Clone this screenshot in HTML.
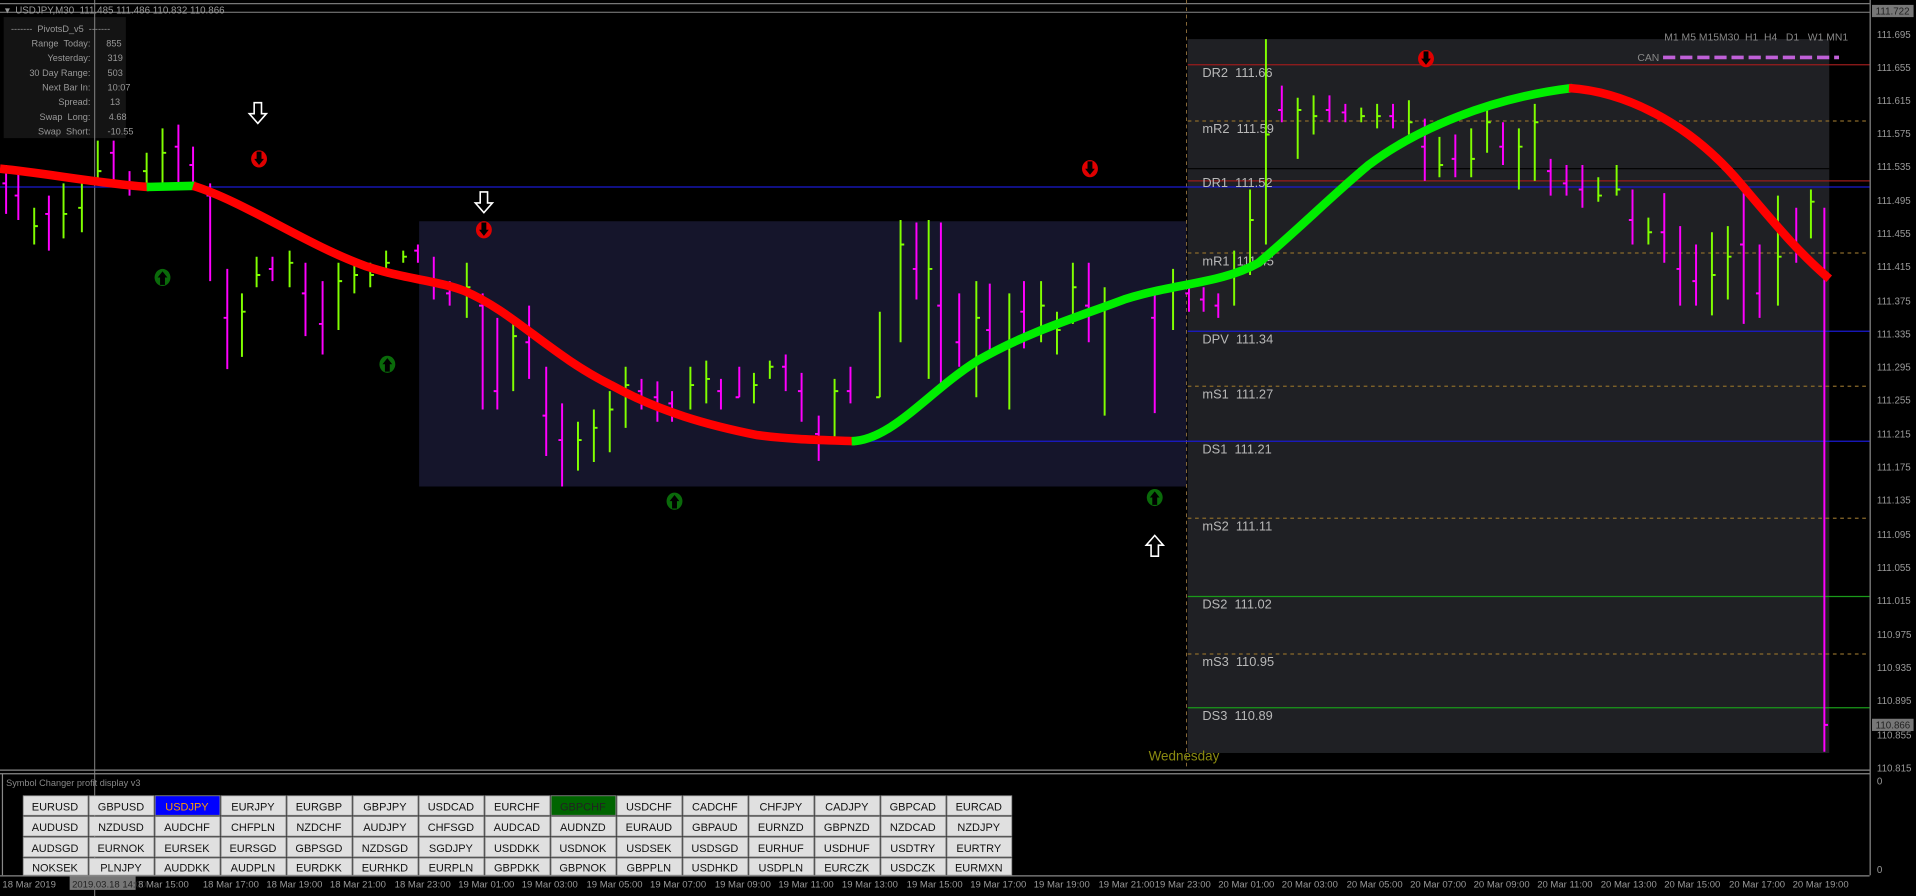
<!DOCTYPE html>
<html><head><meta charset="utf-8"><style>
html,body{margin:0;padding:0;background:#000;overflow:hidden}
svg{display:block}
text{font-family:"Liberation Sans",sans-serif;white-space:pre}
</style></head><body>
<svg width="1916" height="896" viewBox="0 0 1568 733" preserveAspectRatio="none" xmlns="http://www.w3.org/2000/svg" xml:space="preserve">
<rect width="1568" height="733" fill="#000"/>
<line x1="0" y1="3" x2="1530" y2="3" stroke="#777" stroke-width="1"/>
<line x1="0" y1="10" x2="1530" y2="10" stroke="#888" stroke-width="0.8"/>
<line x1="1530.5" y1="0" x2="1530.5" y2="716" stroke="#888" stroke-width="1"/>
<line x1="0" y1="630" x2="1530" y2="630" stroke="#888" stroke-width="1"/>
<line x1="0" y1="633" x2="1530" y2="633" stroke="#888" stroke-width="1"/>
<line x1="2" y1="633" x2="2" y2="716" stroke="#888" stroke-width="1"/>
<line x1="0" y1="716.5" x2="1530" y2="716.5" stroke="#888" stroke-width="1"/>
<rect x="343" y="181" width="628" height="217" fill="#15152b"/>
<rect x="972" y="32" width="525" height="584" fill="#1f2024"/>
<rect x="3" y="14" width="100" height="99" fill="#141414"/>
<line x1="971" y1="0" x2="971" y2="630" stroke="#8a6a3a" stroke-width="0.8" stroke-dasharray="3,3"/>
<line x1="77.5" y1="0" x2="77.5" y2="733" stroke="#888" stroke-width="0.8"/>
<g stroke-width="1">
<line x1="972" y1="53" x2="1530" y2="53" stroke="#9a1c1c"/>
<line x1="972" y1="99" x2="1530" y2="99" stroke="#8a6a2a" stroke-dasharray="3,3"/>
<line x1="972" y1="138" x2="1497" y2="138" stroke="#000"/>
<line x1="972" y1="148" x2="1530" y2="148" stroke="#9a1c1c"/>
<line x1="0" y1="153" x2="1530" y2="153" stroke="#1a1ad0"/>
<line x1="972" y1="207" x2="1530" y2="207" stroke="#8a6a2a" stroke-dasharray="3,3"/>
<line x1="972" y1="271" x2="1530" y2="271" stroke="#1a1ad0"/>
<line x1="972" y1="316" x2="1530" y2="316" stroke="#8a6a2a" stroke-dasharray="3,3"/>
<line x1="700" y1="361" x2="1530" y2="361" stroke="#1a1ad0"/>
<line x1="972" y1="424" x2="1530" y2="424" stroke="#8a6a2a" stroke-dasharray="3,3"/>
<line x1="972" y1="488" x2="1530" y2="488" stroke="#1a9a1a"/>
<line x1="972" y1="535" x2="1530" y2="535" stroke="#8a6a2a" stroke-dasharray="3,3"/>
<line x1="972" y1="579" x2="1530" y2="579" stroke="#1a9a1a"/>
</g>
<g fill="#b8b8b8" font-size="10.5">
<text x="984" y="63">DR2  111.66</text>
<text x="984" y="109">mR2  111.59</text>
<text x="984" y="153">DR1  111.52</text>
<text x="984" y="217">mR1  111.45</text>
<text x="984" y="281">DPV  111.34</text>
<text x="984" y="326">mS1  111.27</text>
<text x="984" y="371">DS1  111.21</text>
<text x="984" y="434">mS2  111.11</text>
<text x="984" y="498">DS2  111.02</text>
<text x="984" y="545">mS3  110.95</text>
<text x="984" y="589">DS3  110.89</text>
</g>
<text x="940" y="622" fill="#8a8a10" font-size="11">Wednesday</text>
<text x="1362" y="33" fill="#888" font-size="8.5">M1 M5 M15M30  H1  H4   D1   W1 MN1</text>
<text x="1340" y="50" fill="#888" font-size="8.5">CAN</text>
<line x1="1361" y1="47" x2="1505" y2="47" stroke="#c060d8" stroke-width="3" stroke-dasharray="10,4"/>
<g stroke-width="1.6" fill="none">
<path stroke="#ff00ff" d="M5 135V175M15 140V180M40 160V205M93 115V150M106 140V160M146 102V150M158 120V150M172 150V230M186 220V302M223 210V230M250 215V275M264 230V290M342 200V215M355 210V245M368 230V250M395 240V335M407 260V335M433 250V310M447 300V373M460 330V398M525 310V335M538 312V345M550 320V345M590 310V335M605 300V325M643 290V320M656 305V345M670 340V377M696 300V330M750 182V245M770 182V320M785 240V300M810 232V290M838 230V285M891 215V280M945 240V338M973 230V255M985 235V255M997 240V260M1049 70V100M1088 78V100M1101 85V100M1140 85V105M1166 97V148M1191 110V145M1230 100V135M1269 130V160M1282 135V160M1295 135V170M1336 155V200M1362 158V215M1375 185V250M1388 200V250M1427 155V265M1440 200V260M1470 170V215M1493 170V615"/>
<path stroke="#ff00ff" d="M2 150h3M12 160h3M37 175h3M90 125h3M103 150h3M143 120h3M155 135h3M169 160h3M183 260h3M220 220h3M247 240h3M261 265h3M339 205h3M352 230h3M365 240h3M392 250h3M404 320h3M430 280h3M444 340h3M457 360h3M522 320h3M535 325h3M547 330h3M587 320h3M602 325h3M640 300h3M653 320h3M667 355h3M693 320h3M747 220h3M767 250h3M782 280h3M807 270h3M835 255h3M888 250h3M942 260h3M970 240h3M982 245h3M994 250h3M1046 90h3M1085 90h3M1098 92h3M1137 95h3M1163 120h3M1188 130h3M1227 120h3M1266 140h3M1279 150h3M1292 155h3M1333 180h3M1359 190h3M1372 220h3M1385 230h3M1424 200h3M1437 240h3M1467 200h3M1493 593h3"/>
<path stroke="#80ff00" d="M28 170V200M52 150V195M67 150V190M80 115V150M120 125V150M133 105V150M198 240V292M210 210V235M237 205V235M277 215V270M290 215V240M303 215V235M316 205V225M330 205V215M382 215V260M420 260V320M473 345V385M486 335V378M499 320V370M512 300V350M565 300V335M578 295V330M617 305V330M630 295V310M683 310V360M720 255V325M737 180V280M760 180V310M799 230V325M826 240V335M852 230V280M865 255V290M878 215V265M904 235V340M960 220V270M1010 205V250M1023 155V225M1036 32V200M1062 80V130M1075 78V110M1114 88V100M1127 85V105M1153 82V110M1178 112V145M1204 105V145M1217 88V125M1243 105V155M1256 85V148M1308 145V165M1323 135V160M1349 178V200M1401 190V258M1414 185V245M1455 160V250M1482 155V195"/>
<path stroke="#80ff00" d="M28 185h3M52 175h3M64 170h3M80 140h3M117 140h3M133 125h3M198 255h3M210 225h3M237 215h3M277 230h3M290 225h3M303 225h3M316 215h3M330 210h3M382 235h3M420 275h3M473 360h3M486 350h3M499 335h3M512 315h3M565 315h3M578 310h3M617 315h3M630 300h3M683 320h3M717 325h3M737 200h3M760 220h3M799 260h3M826 280h3M852 250h3M865 270h3M878 235h3M904 250h3M960 235h3M1010 225h3M1023 180h3M1036 110h3M1062 90h3M1075 95h3M1114 95h3M1127 95h3M1153 100h3M1178 135h3M1204 130h3M1217 100h3M1243 120h3M1256 100h3M1308 160h3M1323 155h3M1349 190h3M1401 225h3M1414 210h3M1455 210h3M1482 165h3"/>
</g>
<g fill="none" stroke-width="7" stroke-linecap="butt">
<path stroke="#ff0000" d="M0 138C40 142 80 150 122 153"/>
<path stroke="#00ee00" d="M120 153L160 152"/>
<path stroke="#ff0000" d="M158 152C200 165 250 200 300 218C330 228 360 230 380 238C420 255 450 290 500 315C540 337 580 348 620 356C650 360 680 360 700 361"/>
<path stroke="#00ee00" d="M697 361C730 360 760 320 800 295C840 272 880 260 920 245C960 232 1000 232 1030 215C1060 190 1090 160 1120 135C1160 105 1220 80 1287 72"/>
<path stroke="#ff0000" d="M1284 72C1330 75 1380 100 1420 145C1450 180 1470 205 1497 228"/>
</g>
<g fill="none" stroke="#fff" stroke-width="1.3">
<path d="M208 84h6v9h4l-7 8l-7-8h4z"/>
<path d="M393 157h6v9h4l-7 8l-7-8h4z"/>
<path d="M942 455h6v-9h4l-7-8l-7 8h4z"/>
</g>
<g>
<g transform="translate(212,130)"><ellipse rx="6.5" ry="7" fill="#e00000"/><path d="M-2 -6v6h-2l4 5 4-5h-2v-6z" fill="#000"/></g>
<g transform="translate(396,188)"><ellipse rx="6.5" ry="7" fill="#e00000"/><path d="M-2 -6v6h-2l4 5 4-5h-2v-6z" fill="#000"/></g>
<g transform="translate(892,138)"><ellipse rx="6.5" ry="7" fill="#e00000"/><path d="M-2 -6v6h-2l4 5 4-5h-2v-6z" fill="#000"/></g>
<g transform="translate(1167,48)"><ellipse rx="6.5" ry="7" fill="#e00000"/><path d="M-2 -6v6h-2l4 5 4-5h-2v-6z" fill="#000"/></g>
<g transform="translate(133,227)"><ellipse rx="6.5" ry="7" fill="#0a6a0a"/><path d="M-2 6v-6h-2l4-5 4 5h-2v6z" fill="#000"/></g>
<g transform="translate(317,298)"><ellipse rx="6.5" ry="7" fill="#0a6a0a"/><path d="M-2 6v-6h-2l4-5 4 5h-2v6z" fill="#000"/></g>
<g transform="translate(552,410)"><ellipse rx="6.5" ry="7" fill="#0a6a0a"/><path d="M-2 6v-6h-2l4-5 4 5h-2v6z" fill="#000"/></g>
<g transform="translate(945,407)"><ellipse rx="6.5" ry="7" fill="#0a6a0a"/><path d="M-2 6v-6h-2l4-5 4 5h-2v6z" fill="#000"/></g>
</g>
<text x="4" y="11" fill="#999" font-size="8">▾  USDJPY,M30  111.485 111.486 110.832 110.866</text>
<g fill="#999" font-size="7.5" text-anchor="end">
<text x="74" y="38">Range  Today:</text><text x="74" y="50">Yesterday:</text><text x="74" y="62">30 Day Range:</text><text x="74" y="74">Next Bar In:</text><text x="74" y="86">Spread:</text><text x="74" y="98">Swap  Long:</text><text x="74" y="110">Swap  Short:</text>
</g>
<text x="9" y="26" fill="#999" font-size="7.5">-------  PivotsD_v5  -------</text>
<g fill="#999" font-size="7.5">
<text x="87" y="38">855</text><text x="88" y="50">319</text><text x="88" y="62">503</text><text x="88" y="74">10:07</text><text x="90" y="86">13</text><text x="89" y="98">4.68</text><text x="88" y="110">-10.55</text>
</g>
<g fill="#999" font-size="8">
<text x="1536" y="58">111.655</text><text x="1536" y="85">111.615</text><text x="1536" y="112">111.575</text><text x="1536" y="139">111.535</text><text x="1536" y="167">111.495</text><text x="1536" y="194">111.455</text><text x="1536" y="221">111.415</text><text x="1536" y="249">111.375</text><text x="1536" y="276">111.335</text><text x="1536" y="303">111.295</text><text x="1536" y="330">111.255</text><text x="1536" y="358">111.215</text><text x="1536" y="385">111.175</text><text x="1536" y="412">111.135</text><text x="1536" y="440">111.095</text><text x="1536" y="467">111.055</text><text x="1536" y="494">111.015</text><text x="1536" y="522">110.975</text><text x="1536" y="549">110.935</text><text x="1536" y="576">110.895</text><text x="1536" y="604">110.855</text><text x="1536" y="631">110.815</text>
<text x="1536" y="31">111.695</text>
<text x="1536" y="642">0</text><text x="1536" y="714">0</text>
</g>
<rect x="1532" y="4" width="34" height="10" fill="#777"/><text x="1535" y="12" fill="#222" font-size="8">111.722</text>
<rect x="1532" y="588" width="34" height="10" fill="#777"/><text x="1535" y="596" fill="#222" font-size="8">110.866</text>
<text x="5" y="643" fill="#888" font-size="7.5">Symbol Changer profit display v3</text>
<g font-size="9" text-anchor="middle">
<g stroke="#888" stroke-width="0.7">
<rect x="19" y="651" width="53" height="16" fill="#e0e0e0"/><rect x="73" y="651" width="53" height="16" fill="#e0e0e0"/><rect x="127" y="651" width="53" height="16" fill="#0000ff"/><rect x="181" y="651" width="53" height="16" fill="#e0e0e0"/><rect x="235" y="651" width="53" height="16" fill="#e0e0e0"/><rect x="289" y="651" width="53" height="16" fill="#e0e0e0"/><rect x="343" y="651" width="53" height="16" fill="#e0e0e0"/><rect x="397" y="651" width="53" height="16" fill="#e0e0e0"/><rect x="451" y="651" width="53" height="16" fill="#006400"/><rect x="505" y="651" width="53" height="16" fill="#e0e0e0"/><rect x="559" y="651" width="53" height="16" fill="#e0e0e0"/><rect x="613" y="651" width="53" height="16" fill="#e0e0e0"/><rect x="667" y="651" width="53" height="16" fill="#e0e0e0"/><rect x="721" y="651" width="53" height="16" fill="#e0e0e0"/><rect x="775" y="651" width="53" height="16" fill="#e0e0e0"/>
<rect x="19" y="668" width="53" height="16" fill="#e0e0e0"/><rect x="73" y="668" width="53" height="16" fill="#e0e0e0"/><rect x="127" y="668" width="53" height="16" fill="#e0e0e0"/><rect x="181" y="668" width="53" height="16" fill="#e0e0e0"/><rect x="235" y="668" width="53" height="16" fill="#e0e0e0"/><rect x="289" y="668" width="53" height="16" fill="#e0e0e0"/><rect x="343" y="668" width="53" height="16" fill="#e0e0e0"/><rect x="397" y="668" width="53" height="16" fill="#e0e0e0"/><rect x="451" y="668" width="53" height="16" fill="#e0e0e0"/><rect x="505" y="668" width="53" height="16" fill="#e0e0e0"/><rect x="559" y="668" width="53" height="16" fill="#e0e0e0"/><rect x="613" y="668" width="53" height="16" fill="#e0e0e0"/><rect x="667" y="668" width="53" height="16" fill="#e0e0e0"/><rect x="721" y="668" width="53" height="16" fill="#e0e0e0"/><rect x="775" y="668" width="53" height="16" fill="#e0e0e0"/>
<rect x="19" y="685" width="53" height="16" fill="#e0e0e0"/><rect x="73" y="685" width="53" height="16" fill="#e0e0e0"/><rect x="127" y="685" width="53" height="16" fill="#e0e0e0"/><rect x="181" y="685" width="53" height="16" fill="#e0e0e0"/><rect x="235" y="685" width="53" height="16" fill="#e0e0e0"/><rect x="289" y="685" width="53" height="16" fill="#e0e0e0"/><rect x="343" y="685" width="53" height="16" fill="#e0e0e0"/><rect x="397" y="685" width="53" height="16" fill="#e0e0e0"/><rect x="451" y="685" width="53" height="16" fill="#e0e0e0"/><rect x="505" y="685" width="53" height="16" fill="#e0e0e0"/><rect x="559" y="685" width="53" height="16" fill="#e0e0e0"/><rect x="613" y="685" width="53" height="16" fill="#e0e0e0"/><rect x="667" y="685" width="53" height="16" fill="#e0e0e0"/><rect x="721" y="685" width="53" height="16" fill="#e0e0e0"/><rect x="775" y="685" width="53" height="16" fill="#e0e0e0"/>
<rect x="19" y="702" width="53" height="14" fill="#e0e0e0"/><rect x="73" y="702" width="53" height="14" fill="#e0e0e0"/><rect x="127" y="702" width="53" height="14" fill="#e0e0e0"/><rect x="181" y="702" width="53" height="14" fill="#e0e0e0"/><rect x="235" y="702" width="53" height="14" fill="#e0e0e0"/><rect x="289" y="702" width="53" height="14" fill="#e0e0e0"/><rect x="343" y="702" width="53" height="14" fill="#e0e0e0"/><rect x="397" y="702" width="53" height="14" fill="#e0e0e0"/><rect x="451" y="702" width="53" height="14" fill="#e0e0e0"/><rect x="505" y="702" width="53" height="14" fill="#e0e0e0"/><rect x="559" y="702" width="53" height="14" fill="#e0e0e0"/><rect x="613" y="702" width="53" height="14" fill="#e0e0e0"/><rect x="667" y="702" width="53" height="14" fill="#e0e0e0"/><rect x="721" y="702" width="53" height="14" fill="#e0e0e0"/><rect x="775" y="702" width="53" height="14" fill="#e0e0e0"/>
</g>
<g fill="#111">
<text x="45" y="663">EURUSD</text><text x="99" y="663">GBPUSD</text><text x="153" y="663" fill="#ff9900">USDJPY</text><text x="207" y="663">EURJPY</text><text x="261" y="663">EURGBP</text><text x="315" y="663">GBPJPY</text><text x="369" y="663">USDCAD</text><text x="423" y="663">EURCHF</text><text x="477" y="663" fill="#222">GBPCHF</text><text x="531" y="663">USDCHF</text><text x="585" y="663">CADCHF</text><text x="639" y="663">CHFJPY</text><text x="693" y="663">CADJPY</text><text x="747" y="663">GBPCAD</text><text x="801" y="663">EURCAD</text>
<text x="45" y="680">AUDUSD</text><text x="99" y="680">NZDUSD</text><text x="153" y="680">AUDCHF</text><text x="207" y="680">CHFPLN</text><text x="261" y="680">NZDCHF</text><text x="315" y="680">AUDJPY</text><text x="369" y="680">CHFSGD</text><text x="423" y="680">AUDCAD</text><text x="477" y="680">AUDNZD</text><text x="531" y="680">EURAUD</text><text x="585" y="680">GBPAUD</text><text x="639" y="680">EURNZD</text><text x="693" y="680">GBPNZD</text><text x="747" y="680">NZDCAD</text><text x="801" y="680">NZDJPY</text>
<text x="45" y="697">AUDSGD</text><text x="99" y="697">EURNOK</text><text x="153" y="697">EURSEK</text><text x="207" y="697">EURSGD</text><text x="261" y="697">GBPSGD</text><text x="315" y="697">NZDSGD</text><text x="369" y="697">SGDJPY</text><text x="423" y="697">USDDKK</text><text x="477" y="697">USDNOK</text><text x="531" y="697">USDSEK</text><text x="585" y="697">USDSGD</text><text x="639" y="697">EURHUF</text><text x="693" y="697">USDHUF</text><text x="747" y="697">USDTRY</text><text x="801" y="697">EURTRY</text>
<text x="45" y="713">NOKSEK</text><text x="99" y="713">PLNJPY</text><text x="153" y="713">AUDDKK</text><text x="207" y="713">AUDPLN</text><text x="261" y="713">EURDKK</text><text x="315" y="713">EURHKD</text><text x="369" y="713">EURPLN</text><text x="423" y="713">GBPDKK</text><text x="477" y="713">GBPNOK</text><text x="531" y="713">GBPPLN</text><text x="585" y="713">USDHKD</text><text x="639" y="713">USDPLN</text><text x="693" y="713">EURCZK</text><text x="747" y="713">USDCZK</text><text x="801" y="713">EURMXN</text>
</g>
</g>
<rect x="57" y="717" width="54" height="11" fill="#777"/>
<g fill="#999" font-size="7.8">
<text x="2" y="726">18 Mar 2019</text><text x="59" y="726" fill="#222">2019.03.18 14:00</text>
<text x="113" y="726">8 Mar 15:00</text><text x="166" y="726">18 Mar 17:00</text><text x="218" y="726">18 Mar 19:00</text><text x="270" y="726">18 Mar 21:00</text><text x="323" y="726">18 Mar 23:00</text><text x="375" y="726">19 Mar 01:00</text><text x="427" y="726">19 Mar 03:00</text><text x="480" y="726">19 Mar 05:00</text><text x="532" y="726">19 Mar 07:00</text><text x="585" y="726">19 Mar 09:00</text><text x="637" y="726">19 Mar 11:00</text><text x="689" y="726">19 Mar 13:00</text><text x="742" y="726">19 Mar 15:00</text><text x="794" y="726">19 Mar 17:00</text><text x="846" y="726">19 Mar 19:00</text><text x="899" y="726">19 Mar 21:00</text><text x="945" y="726">19 Mar 23:00</text><text x="997" y="726">20 Mar 01:00</text><text x="1049" y="726">20 Mar 03:00</text><text x="1102" y="726">20 Mar 05:00</text><text x="1154" y="726">20 Mar 07:00</text><text x="1206" y="726">20 Mar 09:00</text><text x="1258" y="726">20 Mar 11:00</text><text x="1310" y="726">20 Mar 13:00</text><text x="1362" y="726">20 Mar 15:00</text><text x="1415" y="726">20 Mar 17:00</text><text x="1467" y="726">20 Mar 19:00</text>
</g>
</svg>
</body></html>
